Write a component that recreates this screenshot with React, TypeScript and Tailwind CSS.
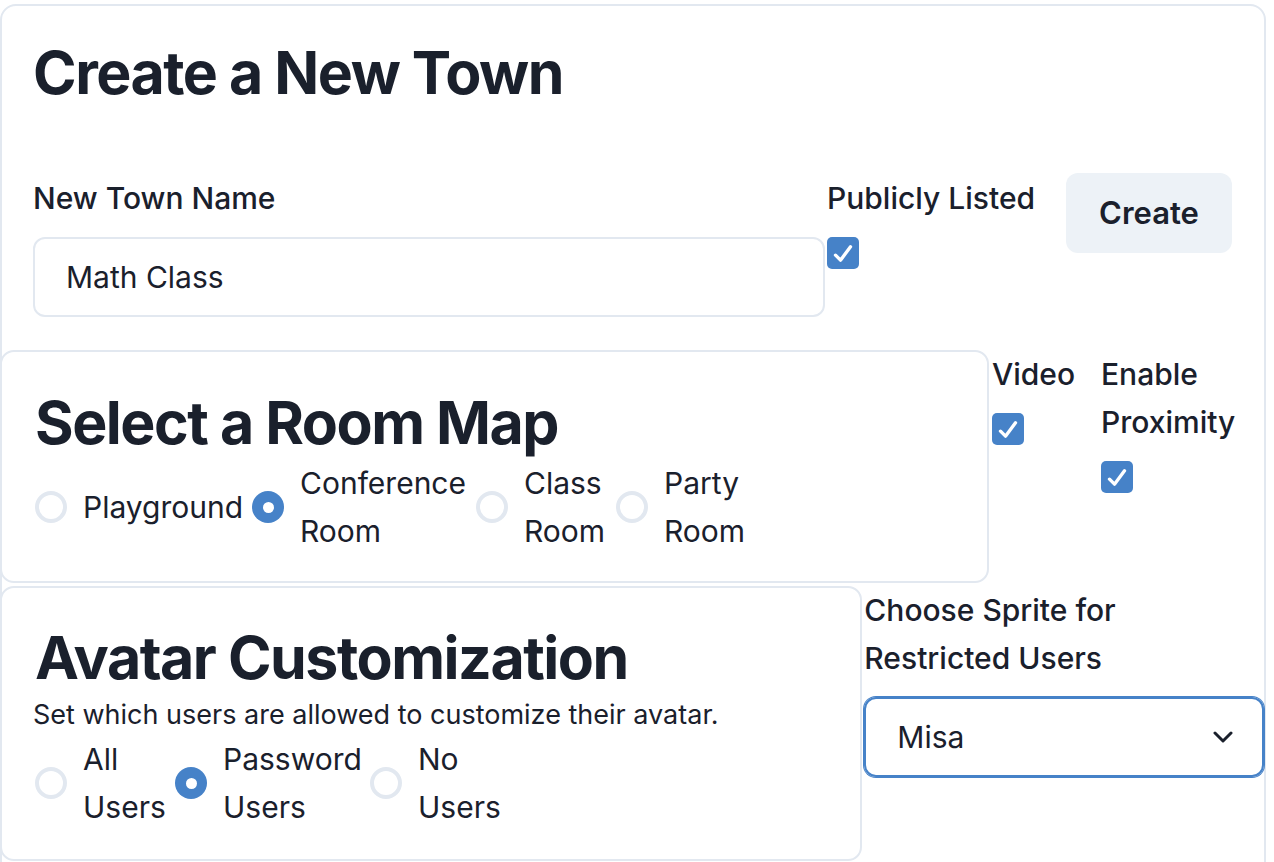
import React from "react";

function Check() {
  return (
    <div className="w-[32px] h-[32px] rounded-[5px] bg-[#4682c8] flex items-center justify-center">
      <svg width="20" height="17" viewBox="0 0 12 10" fill="none" stroke="white" strokeWidth="2" strokeLinecap="round" strokeLinejoin="round">
        <polyline points="1.5 6 4.5 9 10.5 1" />
      </svg>
    </div>
  );
}

function Radio({ checked }: { checked?: boolean }) {
  return checked ? (
    <div className="w-[32px] h-[32px] rounded-full bg-[#4682c8] flex items-center justify-center shrink-0">
      <div className="w-[11px] h-[11px] rounded-full bg-white" />
    </div>
  ) : (
    <div className="w-[32px] h-[32px] rounded-full border-[4px] border-[#e2e8f0] shrink-0" />
  );
}

function RadioItem({ checked, lines, w }: { checked?: boolean; lines: string[]; w: string }) {
  return (
    <div className="flex items-center">
      <Radio checked={checked} />
      <div className={"ml-[16px] leading-[48px] whitespace-nowrap " + w}>
        {lines.map((l, i) => (
          <div key={i}>{l}</div>
        ))}
      </div>
    </div>
  );
}

export default function App() {
  return (
    <div className="w-[1274px] h-[862px] overflow-hidden bg-white text-[#1a202c] font-['Inter',sans-serif] text-[30px]">
      <div className="mt-[4px] w-[1266px] h-[900px] border-2 border-[#e2e8f0] rounded-[16px]">
        <h1 className="ml-[31px] mt-[31px] text-[59px] font-bold leading-[72px] tracking-[-0.025em]">Create a New Town</h1>

        <div className="mt-[65px] flex items-start">
          <div className="ml-[31px] w-[792px]">
            <div className="font-medium leading-[48px]">New Town Name</div>
            <div className="mt-[15px] h-[80px] border-2 border-[#e2e8f0] rounded-[12px] flex items-center pl-[31px]">Math Class</div>
          </div>
          <div className="ml-[2px] w-[214px]">
            <div className="font-medium leading-[48px] whitespace-nowrap">Publicly Listed</div>
            <div className="mt-[15px]">
              <Check />
            </div>
          </div>
          <button className="ml-[25px] -mt-[1px] w-[166px] h-[80px] rounded-[12px] bg-[#edf2f7] text-[31px] font-semibold">Create</button>
        </div>

        <div className="mt-[33px] flex items-start">
          <div className="-ml-[2px] w-[989px] border-2 border-[#e2e8f0] rounded-[14px] pl-[33px] pt-[35px] pb-[26px]">
            <h2 className="text-[59px] font-bold leading-[72px] tracking-[-0.025em]">Select a Room Map</h2>
            <div className="flex items-center gap-[8px] h-[96px]">
              <RadioItem lines={["Playground"]} w="w-[161px]" />
              <RadioItem checked lines={["Conference", "Room"]} w="w-[168px]" />
              <RadioItem lines={["Class", "Room"]} w="w-[84px]" />
              <RadioItem lines={["Party", "Room"]} w="w-[84px]" />
            </div>
          </div>
          <div className="ml-[3px] w-[109px]">
            <div className="font-medium leading-[48px]">Video</div>
            <div className="mt-[15px]">
              <Check />
            </div>
          </div>
          <div className="w-[140px]">
            <div className="font-medium leading-[48px]">
              Enable
              <br />
              Proximity
            </div>
            <div className="mt-[15px]">
              <Check />
            </div>
          </div>
        </div>

        <div className="mt-[3px] flex items-start">
          <div className="-ml-[2px] w-[863px] border-2 border-[#e2e8f0] rounded-[14px] pl-[33px] pt-[34px] pb-[28px]">
            <h2 className="text-[59px] font-bold leading-[72px] tracking-[-0.025em]">Avatar Customization</h2>
            <div className="text-[27px] leading-[41px] -ml-[2px]">Set which users are allowed to customize their avatar.</div>
            <div className="flex items-center gap-[8px] h-[96px]">
              <RadioItem lines={["All", "Users"]} w="w-[84px]" />
              <RadioItem checked lines={["Password", "Users"]} w="w-[139px]" />
              <RadioItem lines={["No", "Users"]} w="w-[84px]" />
            </div>
          </div>
          <div className="ml-[2px] w-[400px]">
            <div className="font-medium leading-[48px]">
              Choose Sprite for
              <br />
              Restricted Users
            </div>
            <div className="mt-[15px] h-[80px] border-2 border-[#4682c8] shadow-[0_0_0_1px_#4682c8] rounded-[12px] flex items-center justify-between pl-[31px] pr-[29px]">
              <span>Misa</span>
              <svg width="20" height="12" viewBox="0 0 20 12" fill="none" stroke="#1a202c" strokeWidth="3" strokeLinecap="round" strokeLinejoin="round">
                <polyline points="2 2 10 10 18 2" />
              </svg>
            </div>
          </div>
        </div>
      </div>
    </div>
  );
}
